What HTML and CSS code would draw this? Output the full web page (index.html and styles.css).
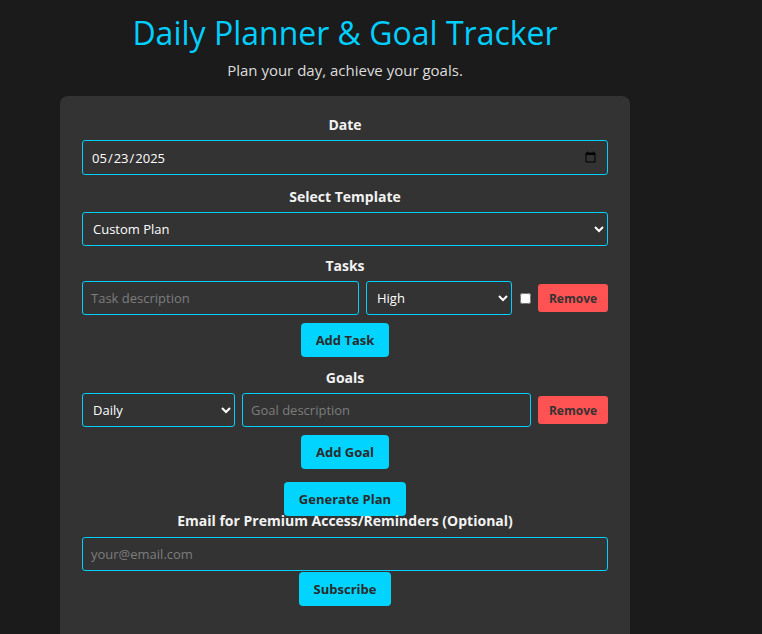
FILE: index.html
```html
<!DOCTYPE html>
<html lang="en">
<head>
<meta charset="utf-8">
<title>Daily Planner &amp; Goal Tracker</title>
<link rel="stylesheet" href="styles.css">
</head>
<body>
<div class="page">
  <header class="header">
    <h1 class="title">Daily Planner &amp; Goal Tracker</h1>
    <p class="subtitle">Plan your day, achieve your goals.</p>
  </header>
  <main class="card">
    <label class="label" for="date">Date</label>
    <input class="field date-field" id="date" type="date" value="2025-05-23">

    <label class="label" for="template">Select Template</label>
    <select class="field template" id="template">
      <option>Custom Plan</option>
    </select>

    <div class="label">Tasks</div>
    <div class="row">
      <input class="field task-input" type="text" placeholder="Task description">
      <select class="field priority">
        <option>High</option>
      </select>
      <input class="check" type="checkbox">
      <button class="remove">Remove</button>
    </div>
    <div class="center"><button class="btn add-btn">Add Task</button></div>

    <div class="label goals-label">Goals</div>
    <div class="row">
      <select class="field period">
        <option>Daily</option>
      </select>
      <input class="field goal-input" type="text" placeholder="Goal description">
      <button class="remove">Remove</button>
    </div>
    <div class="center"><button class="btn add-btn">Add Goal</button></div>

    <div class="center"><button class="btn generate">Generate Plan</button></div>

    <label class="label email-label" for="email">Email for Premium Access/Reminders (Optional)</label>
    <input class="field email" id="email" type="email" placeholder="your@email.com">
    <div class="center"><button class="btn subscribe">Subscribe</button></div>
  </main>
</div>
</body>
</html>
```

FILE: styles.css
```css
* { box-sizing: border-box; }
body {
  margin: 0;
  background: #1b1b1b;
  color: #fff;
  font-family: "Open Sans", "DejaVu Sans", sans-serif;
}
.page {
  width: 570px;
  margin-left: 60px;
}
.header { text-align: center; }
.title {
  margin: 14px 0 0;
  font-size: 32px;
  line-height: 38px;
  font-weight: 400;
  color: #00cfff;
}
.subtitle {
  margin: 6px 0 0;
  font-size: 15px;
  line-height: 24px;
  color: #dddddd;
}
.card {
  margin-top: 14px;
  background: #333333;
  border-radius: 8px;
  padding: 19px 22px 40px;
  height: 560px;
}
.label {
  display: block;
  text-align: center;
  font-size: 14px;
  line-height: 20px;
  font-weight: 700;
  color: #f2f2f2;
  margin-bottom: 5px;
}
.field {
  display: block;
  width: 100%;
  height: 34px;
  margin: 0 0 12px;
  padding: 0 8px;
  background: #333333;
  color: #ffffff;
  border: 1px solid #00cfff;
  border-radius: 3px;
  font-family: inherit;
  font-size: 13px;
}
select.field { padding: 0 6px; }
.date-field { height: 35px; }
.template { margin-bottom: 10px; }
.field::placeholder { color: #7d7d7d; }
.row {
  display: flex;
  align-items: center;
  gap: 7px;
}
.row .field { margin: 0; }
.task-input { flex: 1; }
.priority { width: 146px; flex: none; }
.period { width: 153px; flex: none; }
.goal-input { flex: 1; }
.check {
  width: 11px;
  height: 11px;
  margin: 0 0 0 1px;
  flex: none;
}
.remove {
  flex: none;
  width: 70px;
  height: 28px;
  background: #ff5252;
  color: #333;
  border: none;
  border-radius: 3px;
  font-family: inherit;
  font-size: 12px;
  font-weight: 700;
}
.center {
  display: flex;
  justify-content: center;
}
.btn {
  height: 34px;
  padding: 0 15px;
  background: #00d4ff;
  color: #2b2b2b;
  border: none;
  border-radius: 4px;
  font-family: inherit;
  font-size: 13px;
  font-weight: 700;
}
.add-btn { margin: 8px 0 11px; }
.generate { margin-top: 2px; }
.email-label { margin-top: -5px; margin-bottom: 6px; }
.email { margin-bottom: 1px; }
```
